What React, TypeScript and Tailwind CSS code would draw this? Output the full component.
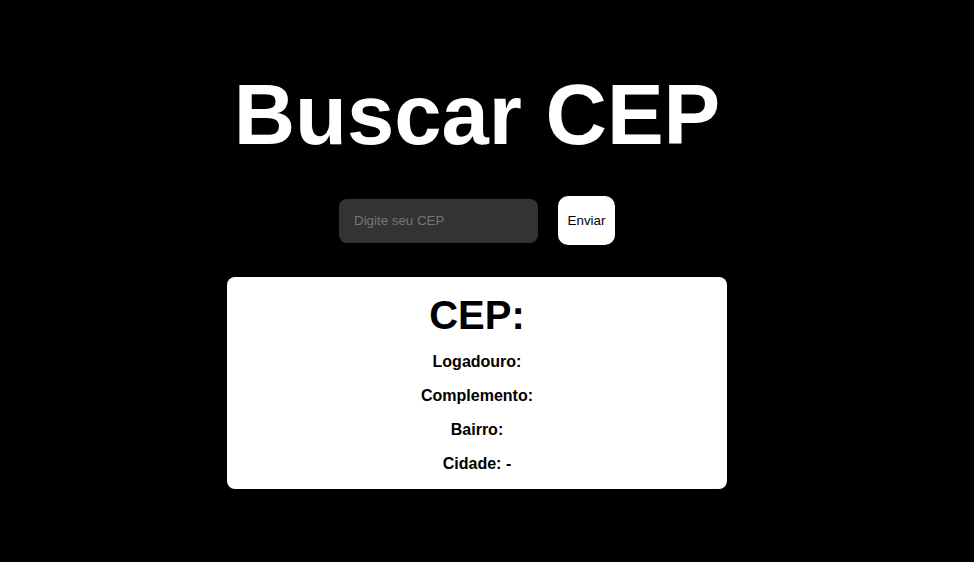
import React from "react";

const campos = ["Logadouro:", "Complemento:", "Bairro:", "Cidade: -"];

export default function App() {
	return (
		<div className="min-h-[562px] w-full bg-black font-['Liberation_Sans',Arial,sans-serif]">
			<div className="w-[954px] flex flex-col items-center">
				<h1 className="mt-[66px] text-[85px] leading-[98px] font-bold text-white">
					Buscar CEP
				</h1>
				<div className="mt-[32px] flex items-center gap-[20px]">
					<input
						type="text"
						placeholder="Digite seu CEP"
						className="w-[199px] h-[44px] rounded-[8px] bg-[#333333] px-[15px] text-[13.33px] text-white placeholder:text-[#757575] outline-none"
					/>
					<button className="w-[57px] h-[49px] rounded-[10px] bg-white text-[13.33px] text-black">
						Enviar
					</button>
				</div>
				<div className="mt-[32px] w-[500px] rounded-[8px] bg-white pt-[15px] pb-[16px] flex flex-col items-center text-black">
					<h2 className="text-[40px] leading-[46px] font-bold">CEP:</h2>
					<div className="mt-[15px] flex flex-col items-center gap-[16px]">
						{campos.map((c) => (
							<p key={c} className="text-[16px] leading-[18px] font-bold">
								{c}
							</p>
						))}
					</div>
				</div>
			</div>
		</div>
	);
}
